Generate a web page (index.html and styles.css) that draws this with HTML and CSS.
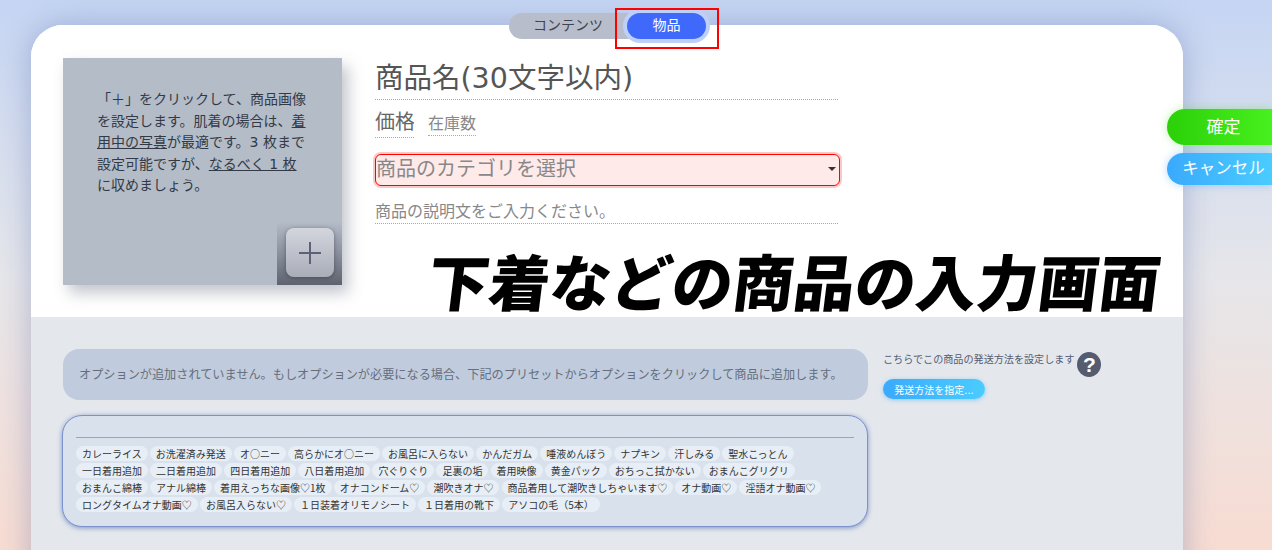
FILE: index.html
```html
<!DOCTYPE html>
<html lang="ja">
<head>
    <meta charset="UTF-8">
    <title>商品の入力画面</title>
    <link rel="stylesheet" href="styles.css">
</head>
<body>
    <!-- Tabs -->
    <div class="tabs">
        <a class="tab">コンテンツ</a>
        <a class="tab tab-active">物品</a>
    </div>
    <div class="red-box"></div>

    <!-- Side buttons -->
    <button class="side-btn btn-ok">確定</button>
    <button class="side-btn btn-cancel">キャンセル</button>

    <main class="card">
        <section class="top">
            <div class="photo">
                <p class="photo-text">「＋」をクリックして、商品画像を設定します。肌着の場合は、<u>着用中の写真</u>が最適です。3 枚まで設定可能ですが、<u>なるべく 1 枚</u>に収めましょう。</p>
                <div class="plus-area">
                    <button class="plus-btn">
                        <svg width="24" height="24" viewBox="0 0 24 24"><path d="M12 1v22M1 12h22" stroke="#5c6178" stroke-width="2" fill="none"/></svg>
                    </button>
                </div>
            </div>
            <form class="fields">
                <input class="field field-name" type="text" placeholder="商品名(30文字以内)">
                <div class="price-row">
                    <input class="field field-price" type="text" placeholder="価格">
                    <input class="field field-stock" type="text" placeholder="在庫数">
                </div>
                <div class="category">
                    <select class="field-category">
                        <option>商品のカテゴリを選択</option>
                    </select>
                </div>
                <input class="field field-desc" type="text" placeholder="商品の説明文をご入力ください。">
            </form>
            <h1 class="caption">下着などの商品の入力画面</h1>
        </section>

        <section class="bottom">
            <div class="options">
                <div class="notice">オプションが追加されていません。もしオプションが必要になる場合、下記のプリセットからオプションをクリックして商品に追加します。</div>
                <div class="presets">
                    <hr>
                    <div class="chips">
                        <span class="chip">カレーライス</span>
                        <span class="chip">お洗濯済み発送</span>
                        <span class="chip">オ○ニー</span>
                        <span class="chip">高らかにオ○ニー</span>
                        <span class="chip">お風呂に入らない</span>
                        <span class="chip">かんだガム</span>
                        <span class="chip">唾液めんぼう</span>
                        <span class="chip">ナプキン</span>
                        <span class="chip">汗しみる</span>
                        <span class="chip">聖水こっとん</span>
                        <span class="chip">一日着用追加</span>
                        <span class="chip">二日着用追加</span>
                        <span class="chip">四日着用追加</span>
                        <span class="chip">八日着用追加</span>
                        <span class="chip">穴ぐりぐり</span>
                        <span class="chip">足裏の垢</span>
                        <span class="chip">着用映像</span>
                        <span class="chip">黄金パック</span>
                        <span class="chip">おちっこ拭かない</span>
                        <span class="chip">おまんこグリグリ</span>
                        <span class="chip">おまんこ綿棒</span>
                        <span class="chip">アナル綿棒</span>
                        <span class="chip">着用えっちな画像♡1枚</span>
                        <span class="chip">オナコンドーム♡</span>
                        <span class="chip">潮吹きオナ♡</span>
                        <span class="chip">商品着用して潮吹きしちゃいます♡</span>
                        <span class="chip">オナ動画♡</span>
                        <span class="chip">淫語オナ動画♡</span>
                        <span class="chip">ロングタイムオナ動画♡</span>
                        <span class="chip">お風呂入らない♡</span>
                        <span class="chip">１日装着オリモノシート</span>
                        <span class="chip">１日着用の靴下</span>
                        <span class="chip">アソコの毛（5本）</span>
                    </div>
                </div>
            </div>
            <aside class="shipping">
                <div class="shipping-head">
                    <span class="shipping-text">こちらでこの商品の発送方法を設定します</span>
                    <span class="help">?</span>
                </div>
                <button class="shipping-btn">発送方法を指定...</button>
            </aside>
        </section>
    </main>
</body>
</html>
```

FILE: styles.css
```css
* {
    box-sizing: border-box;
}
html, body {
    height: 550px;
    overflow: hidden;
}
body {
    margin: 0;
    padding: 25px 89px 0 31px;
    background: linear-gradient(#c5d5f3, #e6e6ea 50%, #f8dcd2);
    font-family: "DejaVu Sans", "Noto Sans CJK JP", sans-serif;
}

/* Tabs */
.tabs {
    position: absolute;
    left: 509px;
    top: 13px;
    z-index: 2;
    display: flex;
    width: 197px;
    height: 26px;
    border-radius: 13px;
    background: #b8bdcb;
}
.tab {
    height: 26px;
    font-size: 14px;
    line-height: 24px;
    text-align: center;
    color: #3f4450;
}
.tab:first-child {
    width: 118px;
}
.tab-active {
    width: 79px;
    border-radius: 13px;
    background: #3e69fb;
    color: #fff;
    box-shadow: 0 0 0 4px #bfd0f8;
}
.red-box {
    position: absolute;
    left: 615px;
    top: 8px;
    z-index: 3;
    width: 104px;
    height: 41px;
    border: 2px solid #f00;
}

/* Side buttons */
.side-btn {
    position: absolute;
    left: 1167px;
    z-index: 2;
    width: 105px;
    border: 0;
    border-radius: 18px 0 0 18px;
    color: #fff;
    font-family: inherit;
}
.btn-ok {
    top: 109px;
    height: 36px;
    padding: 0 0 4px 8px;
    font-size: 17px;
    background: linear-gradient(to right, #2bd008, #48f01e);
    box-shadow: 0 0 8px rgba(60, 220, 20, 0.35);
}
.btn-cancel {
    top: 153px;
    height: 32px;
    padding: 0 0 5px 8px;
    font-size: 16.5px;
    background: linear-gradient(to right, #3aaafc, #4accff);
    box-shadow: 0 0 8px rgba(60, 170, 250, 0.4);
}

/* Card */
.card {
    height: 600px;
    border-radius: 32px 32px 0 0;
    overflow: hidden;
    background: #fff;
    box-shadow: 0 0 30px rgba(90, 110, 170, 0.4);
}
.top {
    position: relative;
    display: flex;
    gap: 33px;
    height: 292px;
    padding: 33px 32px 0;
    background: #fff;
}
.photo {
    position: relative;
    flex: none;
    width: 279px;
    height: 227px;
    padding: 31px 32px 0 34px;
    background: #b4bcc8;
    box-shadow: 6px 8px 14px rgba(80, 90, 110, 0.35);
}
.photo-text {
    margin: 0;
    font-size: 14px;
    line-height: 21.5px;
    color: #333a46;
}
.plus-area {
    position: absolute;
    right: 0;
    bottom: 0;
    width: 65px;
    height: 63px;
    background: linear-gradient(rgba(90, 95, 110, 0), #5f6370);
}
.plus-btn {
    position: absolute;
    left: 9px;
    top: 6px;
    display: flex;
    align-items: center;
    justify-content: center;
    width: 48px;
    height: 49px;
    padding: 0;
    border: 0;
    border-radius: 8px;
    background: linear-gradient(#d3d6dd, #a9adb8);
    box-shadow: 0 1px 4px rgba(40, 45, 60, 0.5);
}

/* Form */
.fields {
    display: flex;
    flex-direction: column;
    align-items: flex-start;
    width: 465px;
}
.field {
    display: block;
    padding: 0;
    border: 0;
    border-bottom: 1px dotted #aaa;
    outline: 0;
    background: none;
    font-family: inherit;
}
.field-name {
    width: 463px;
    height: 42px;
    font-size: 28.5px;
}
.field-name::placeholder {
    color: #555;
}
.price-row {
    display: flex;
    align-items: flex-start;
    gap: 14px;
    margin-top: 6px;
}
.field-price {
    width: 39px;
    height: 32px;
    font-size: 20px;
}
.field-price::placeholder {
    color: #666;
}
.field-stock {
    width: 48px;
    height: 30px;
    padding-top: 5px;
    font-size: 16px;
}
.field-stock::placeholder,
.field-desc::placeholder {
    color: #888;
}
.category {
    position: relative;
    width: 465px;
    height: 32px;
    margin-top: 16px;
}
/* small solid arrow, the select itself has none */
.category::after {
    content: "";
    position: absolute;
    right: 4px;
    top: 13px;
    border-top: 4px solid #333;
    border-left: 4px solid transparent;
    border-right: 4px solid transparent;
}
.field-category {
    appearance: none;
    display: block;
    width: 465px;
    height: 32px;
    padding: 0 0 2px;
    border: 1px solid #f00;
    border-radius: 6px;
    outline: 0;
    background-color: #ffeaea;
    box-shadow: 0 0 0 2px #fbc8c8;
    color: #888;
    font-family: inherit;
    font-size: 20px;
}
.field-desc {
    width: 463px;
    height: 28px;
    margin-top: 10px;
    padding-top: 4px;
    font-size: 16px;
}
.caption {
    position: absolute;
    left: 397px;
    top: 225px;
    margin: 0;
    white-space: nowrap;
    font-size: 61px;
    font-weight: 900;
    line-height: 70px;
    color: #000;
    transform: skewX(-7deg);
}

/* Options */
.bottom {
    display: flex;
    gap: 15px;
    height: 308px;
    padding: 32px 32px 0;
    background: #e4e8ed;
}
.options {
    flex: none;
    width: 805px;
}
.notice {
    height: 51px;
    padding: 0 16px;
    border-radius: 16px;
    background: #c0ccdd;
    color: #666e7c;
    font-size: 12.16px;
    line-height: 53px;
    white-space: nowrap;
}
.presets {
    width: 806px;
    height: 112px;
    margin: 15px 0 0 -1px;
    padding: 21px 13px 0;
    border: 1px solid #7d92cc;
    border-radius: 20px;
    background: #d9e2ec;
    box-shadow: 0 1px 5px rgba(60, 90, 170, 0.6);
}
.presets hr {
    height: 1px;
    margin: 0 0 8px;
    border: 0;
    background: #93a6c8;
}
.chips {
    display: flex;
    flex-wrap: wrap;
    gap: 2px 2.1px;
}
.chip {
    height: 15px;
    padding: 0 6px;
    border-radius: 8px;
    background: #e7eef6;
    color: #333;
    font-family: "Noto Sans CJK JP", sans-serif;
    font-size: 10px;
    line-height: 15px;
    white-space: nowrap;
}

/* Shipping */
.shipping {
    width: 230px;
}
.shipping-head {
    display: flex;
    gap: 3px;
    margin-top: 3px;
}
.shipping-text {
    font-size: 10.1px;
    line-height: 16px;
    color: #555c70;
    white-space: nowrap;
}
.help {
    width: 24px;
    height: 25px;
    border-radius: 50%;
    background: #555c70;
    color: #fff;
    font-family: "Liberation Sans", sans-serif;
    font-size: 21px;
    font-weight: bold;
    line-height: 25px;
    text-align: center;
}
.shipping-btn {
    display: block;
    width: 102px;
    height: 20px;
    margin-top: 2px;
    padding: 0;
    border: 0;
    border-radius: 10px;
    background: linear-gradient(to right, #3aaafc, #4accff);
    box-shadow: 0 1px 4px rgba(60, 170, 250, 0.5);
    color: #fff;
    font-family: inherit;
    font-size: 10px;
}
```
